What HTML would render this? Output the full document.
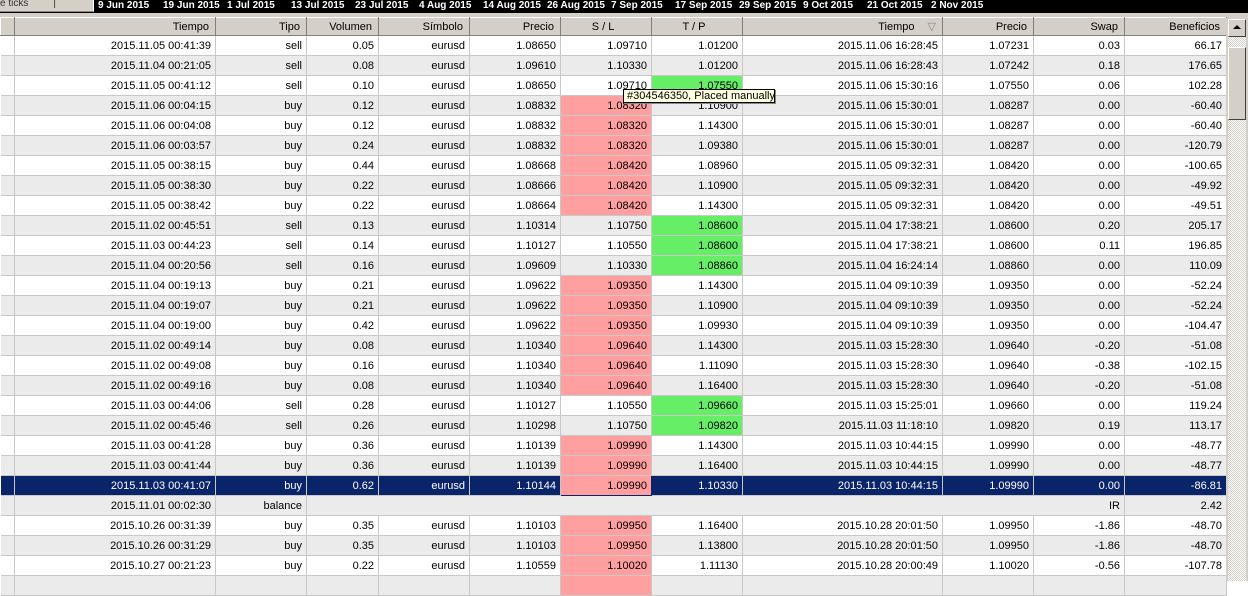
<!DOCTYPE html>
<html><head><meta charset="utf-8">
<style>
*{margin:0;padding:0;box-sizing:border-box}
body{width:1248px;height:581px;overflow:hidden;background:#fff;font-family:"Liberation Sans",sans-serif;font-size:11px;color:#000;position:relative}
#top{position:absolute;left:0;top:0;width:1248px;height:13px;background:#000}
#top span{position:absolute;top:0;color:#fff;font-size:10px;line-height:11px;font-weight:bold;white-space:nowrap}
#lbox{position:absolute;left:0;top:0;width:94px;height:12px;background:#d4d0c8;border-right:1px solid #fff;border-bottom:1px solid #888;overflow:hidden;font-size:10px;line-height:8px;color:#333}
#gap{position:absolute;left:0;top:13px;width:1248px;height:5px;background:#d4d0c8}
table{position:absolute;left:0;top:17px;border-collapse:collapse;table-layout:fixed;width:1226px}
td,th{height:20px;border-right:1px solid #c8c8c8;border-bottom:1px solid #c8c8c8;text-align:right;padding:0 4px 0 0;white-space:nowrap;overflow:hidden;font-weight:normal;line-height:18px}
th{height:18px;line-height:16px;background:#d4d0c8;border-top:1px solid #fff;border-left:1px solid #fff;border-right:1px solid #808080;border-bottom:1px solid #808080;padding-right:6px}
tr:nth-child(odd) td{background:#ebebeb}
td.r{background:#ff9f9f!important}
td.g{background:#66ee66!important}
tr.sel td{background:#0a246a!important;color:#fff}
tr.sel td.r{background:#ff9f9f!important;color:#000;border:1px solid #0a246a}
tr.bal td{border-right:none}
tr.bal td.k{border-right:1px solid #c8c8c8}
#sb{position:absolute;left:1226px;top:18px;width:22px;height:563px;background:#d4d0c8}
#track{position:absolute;left:2px;top:19px;width:18px;height:544px;background-color:#e8e6e0;background-image:repeating-conic-gradient(#d4d0c8 0 25%,#fff 0 50%);background-size:2px 2px}
#up{position:absolute;left:2px;top:1px;width:18px;height:18px;background:#d4d0c8;border:1px solid;border-color:#fff #404040 #404040 #fff}
#up:after{content:"";position:absolute;left:4px;top:5px;border-left:4px solid transparent;border-right:4px solid transparent;border-bottom:4px solid #000}
#thumb{position:absolute;left:2px;top:29px;width:18px;height:73px;background:#d4d0c8;border:1px solid;border-color:#fff #404040 #404040 #fff}
#tip{position:absolute;left:623px;top:89px;width:152px;height:14px;background:#ffffe1;border:1px solid #000;font-size:11px;line-height:12px;padding-left:3px;white-space:nowrap;box-shadow:1px 1px 0 #888}
</style></head><body>
<div id="top">
<span style="left:98px">9 Jun 2015</span><span style="left:163px">19 Jun 2015</span><span style="left:227px">1 Jul 2015</span><span style="left:291px">13 Jul 2015</span><span style="left:355px">23 Jul 2015</span><span style="left:419px">4 Aug 2015</span><span style="left:483px">14 Aug 2015</span><span style="left:547px">26 Aug 2015</span><span style="left:611px">7 Sep 2015</span><span style="left:675px">17 Sep 2015</span><span style="left:739px">29 Sep 2015</span><span style="left:803px">9 Oct 2015</span><span style="left:867px">21 Oct 2015</span><span style="left:931px">2 Nov 2015</span>
</div>
<div id="lbox">e ticks &nbsp;&nbsp;&nbsp;&nbsp;&nbsp;&nbsp;&nbsp;&nbsp;|</div>
<div id="gap"></div>
<table>
<colgroup><col style="width:14px"><col style="width:201px"><col style="width:91px"><col style="width:72px"><col style="width:91px"><col style="width:91px"><col style="width:91px"><col style="width:91px"><col style="width:200px"><col style="width:91px"><col style="width:91px"><col style="width:102px"></colgroup>
<tr><th></th><th>Tiempo</th><th>Tipo</th><th>Volumen</th><th>Símbolo</th><th>Precio</th><th style="text-align:center">S / L</th><th style="text-align:center">T / P</th><th>Tiempo <span style="color:#888;padding-left:10px">▽</span></th><th>Precio</th><th>Swap</th><th>Beneficios</th></tr>
<tr><td></td><td>2015.11.05 00:41:39</td><td>sell</td><td>0.05</td><td>eurusd</td><td>1.08650</td><td>1.09710</td><td>1.01200</td><td>2015.11.06 16:28:45</td><td>1.07231</td><td>0.03</td><td>66.17</td></tr>
<tr><td></td><td>2015.11.04 00:21:05</td><td>sell</td><td>0.08</td><td>eurusd</td><td>1.09610</td><td>1.10330</td><td>1.01200</td><td>2015.11.06 16:28:43</td><td>1.07242</td><td>0.18</td><td>176.65</td></tr>
<tr><td></td><td>2015.11.05 00:41:12</td><td>sell</td><td>0.10</td><td>eurusd</td><td>1.08650</td><td>1.09710</td><td class="g">1.07550</td><td>2015.11.06 15:30:16</td><td>1.07550</td><td>0.06</td><td>102.28</td></tr>
<tr><td></td><td>2015.11.06 00:04:15</td><td>buy</td><td>0.12</td><td>eurusd</td><td>1.08832</td><td class="r">1.08320</td><td>1.10900</td><td>2015.11.06 15:30:01</td><td>1.08287</td><td>0.00</td><td>-60.40</td></tr>
<tr><td></td><td>2015.11.06 00:04:08</td><td>buy</td><td>0.12</td><td>eurusd</td><td>1.08832</td><td class="r">1.08320</td><td>1.14300</td><td>2015.11.06 15:30:01</td><td>1.08287</td><td>0.00</td><td>-60.40</td></tr>
<tr><td></td><td>2015.11.06 00:03:57</td><td>buy</td><td>0.24</td><td>eurusd</td><td>1.08832</td><td class="r">1.08320</td><td>1.09380</td><td>2015.11.06 15:30:01</td><td>1.08287</td><td>0.00</td><td>-120.79</td></tr>
<tr><td></td><td>2015.11.05 00:38:15</td><td>buy</td><td>0.44</td><td>eurusd</td><td>1.08668</td><td class="r">1.08420</td><td>1.08960</td><td>2015.11.05 09:32:31</td><td>1.08420</td><td>0.00</td><td>-100.65</td></tr>
<tr><td></td><td>2015.11.05 00:38:30</td><td>buy</td><td>0.22</td><td>eurusd</td><td>1.08666</td><td class="r">1.08420</td><td>1.10900</td><td>2015.11.05 09:32:31</td><td>1.08420</td><td>0.00</td><td>-49.92</td></tr>
<tr><td></td><td>2015.11.05 00:38:42</td><td>buy</td><td>0.22</td><td>eurusd</td><td>1.08664</td><td class="r">1.08420</td><td>1.14300</td><td>2015.11.05 09:32:31</td><td>1.08420</td><td>0.00</td><td>-49.51</td></tr>
<tr><td></td><td>2015.11.02 00:45:51</td><td>sell</td><td>0.13</td><td>eurusd</td><td>1.10314</td><td>1.10750</td><td class="g">1.08600</td><td>2015.11.04 17:38:21</td><td>1.08600</td><td>0.20</td><td>205.17</td></tr>
<tr><td></td><td>2015.11.03 00:44:23</td><td>sell</td><td>0.14</td><td>eurusd</td><td>1.10127</td><td>1.10550</td><td class="g">1.08600</td><td>2015.11.04 17:38:21</td><td>1.08600</td><td>0.11</td><td>196.85</td></tr>
<tr><td></td><td>2015.11.04 00:20:56</td><td>sell</td><td>0.16</td><td>eurusd</td><td>1.09609</td><td>1.10330</td><td class="g">1.08860</td><td>2015.11.04 16:24:14</td><td>1.08860</td><td>0.00</td><td>110.09</td></tr>
<tr><td></td><td>2015.11.04 00:19:13</td><td>buy</td><td>0.21</td><td>eurusd</td><td>1.09622</td><td class="r">1.09350</td><td>1.14300</td><td>2015.11.04 09:10:39</td><td>1.09350</td><td>0.00</td><td>-52.24</td></tr>
<tr><td></td><td>2015.11.04 00:19:07</td><td>buy</td><td>0.21</td><td>eurusd</td><td>1.09622</td><td class="r">1.09350</td><td>1.10900</td><td>2015.11.04 09:10:39</td><td>1.09350</td><td>0.00</td><td>-52.24</td></tr>
<tr><td></td><td>2015.11.04 00:19:00</td><td>buy</td><td>0.42</td><td>eurusd</td><td>1.09622</td><td class="r">1.09350</td><td>1.09930</td><td>2015.11.04 09:10:39</td><td>1.09350</td><td>0.00</td><td>-104.47</td></tr>
<tr><td></td><td>2015.11.02 00:49:14</td><td>buy</td><td>0.08</td><td>eurusd</td><td>1.10340</td><td class="r">1.09640</td><td>1.14300</td><td>2015.11.03 15:28:30</td><td>1.09640</td><td>-0.20</td><td>-51.08</td></tr>
<tr><td></td><td>2015.11.02 00:49:08</td><td>buy</td><td>0.16</td><td>eurusd</td><td>1.10340</td><td class="r">1.09640</td><td>1.11090</td><td>2015.11.03 15:28:30</td><td>1.09640</td><td>-0.38</td><td>-102.15</td></tr>
<tr><td></td><td>2015.11.02 00:49:16</td><td>buy</td><td>0.08</td><td>eurusd</td><td>1.10340</td><td class="r">1.09640</td><td>1.16400</td><td>2015.11.03 15:28:30</td><td>1.09640</td><td>-0.20</td><td>-51.08</td></tr>
<tr><td></td><td>2015.11.03 00:44:06</td><td>sell</td><td>0.28</td><td>eurusd</td><td>1.10127</td><td>1.10550</td><td class="g">1.09660</td><td>2015.11.03 15:25:01</td><td>1.09660</td><td>0.00</td><td>119.24</td></tr>
<tr><td></td><td>2015.11.02 00:45:46</td><td>sell</td><td>0.26</td><td>eurusd</td><td>1.10298</td><td>1.10750</td><td class="g">1.09820</td><td>2015.11.03 11:18:10</td><td>1.09820</td><td>0.19</td><td>113.17</td></tr>
<tr><td></td><td>2015.11.03 00:41:28</td><td>buy</td><td>0.36</td><td>eurusd</td><td>1.10139</td><td class="r">1.09990</td><td>1.14300</td><td>2015.11.03 10:44:15</td><td>1.09990</td><td>0.00</td><td>-48.77</td></tr>
<tr><td></td><td>2015.11.03 00:41:44</td><td>buy</td><td>0.36</td><td>eurusd</td><td>1.10139</td><td class="r">1.09990</td><td>1.16400</td><td>2015.11.03 10:44:15</td><td>1.09990</td><td>0.00</td><td>-48.77</td></tr>
<tr class="sel"><td></td><td>2015.11.03 00:41:07</td><td>buy</td><td>0.62</td><td>eurusd</td><td>1.10144</td><td class="r">1.09990</td><td>1.10330</td><td>2015.11.03 10:44:15</td><td>1.09990</td><td>0.00</td><td>-86.81</td></tr>
<tr class="bal"><td class="k"></td><td class="k">2015.11.01 00:02:30</td><td class="k">balance</td><td></td><td></td><td></td><td></td><td></td><td></td><td></td><td class="k">IR</td><td class="k">2.42</td></tr>
<tr><td></td><td>2015.10.26 00:31:39</td><td>buy</td><td>0.35</td><td>eurusd</td><td>1.10103</td><td class="r">1.09950</td><td>1.16400</td><td>2015.10.28 20:01:50</td><td>1.09950</td><td>-1.86</td><td>-48.70</td></tr>
<tr><td></td><td>2015.10.26 00:31:29</td><td>buy</td><td>0.35</td><td>eurusd</td><td>1.10103</td><td class="r">1.09950</td><td>1.13800</td><td>2015.10.28 20:01:50</td><td>1.09950</td><td>-1.86</td><td>-48.70</td></tr>
<tr><td></td><td>2015.10.27 00:21:23</td><td>buy</td><td>0.22</td><td>eurusd</td><td>1.10559</td><td class="r">1.10020</td><td>1.11130</td><td>2015.10.28 20:00:49</td><td>1.10020</td><td>-0.56</td><td>-107.78</td></tr>
<tr><td></td><td></td><td></td><td></td><td></td><td></td><td class="r"></td><td></td><td></td><td></td><td></td><td></td></tr>
</table>
<div id="sb"><div id="up"></div><div id="track"></div><div id="thumb"></div></div>
<div id="tip">#304546350, Placed manually</div>
</body></html>
